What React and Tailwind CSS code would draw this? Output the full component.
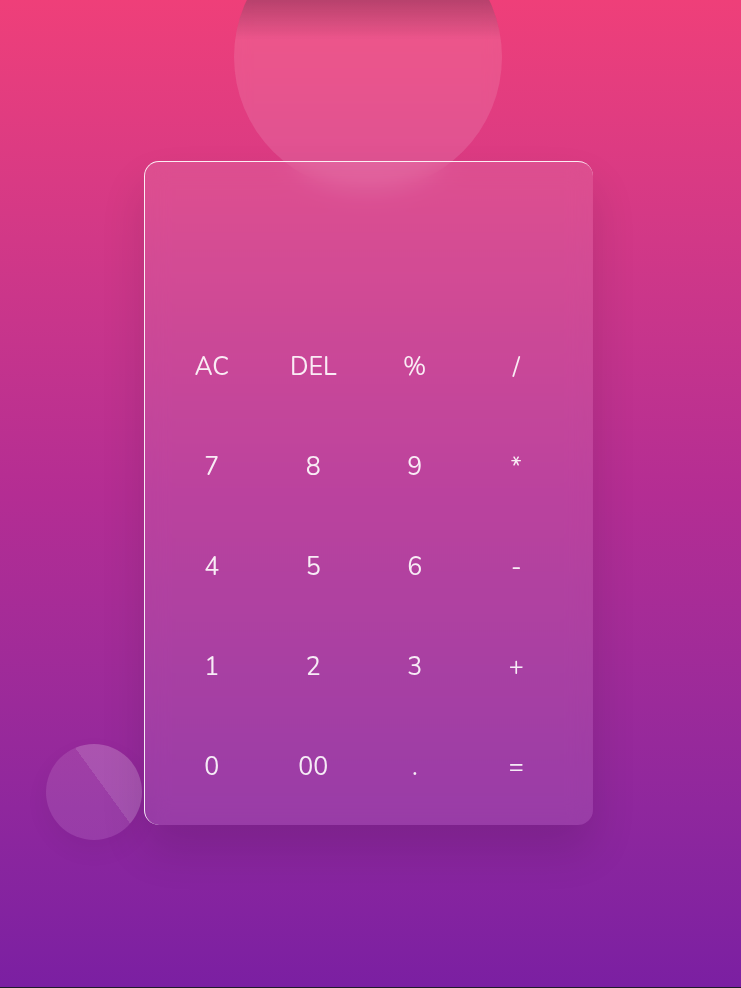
const keys = ['AC', 'DEL', '%', '/', '7', '8', '9', '*', '4', '5', '6', '-', '1', '2', '3', '+', '0', '00', '.', '='];

export default function App() {
    return (
        <div className="min-h-[988px] bg-[#1d1a2a]">
            <div
                className="relative h-[987px] overflow-hidden bg-gradient-to-b from-[#ef3f79] via-[#b42d93] to-[#7b1fa2]"
                style={{ fontFamily: 'Nunito, Lato, "Open Sans", sans-serif' }}
            >
                {/* big glass ball */}
                <div className="absolute left-[234px] top-[-77px] h-[268px] w-[268px] rounded-full bg-[linear-gradient(to_bottom,rgba(100,70,90,0.4)_77px,rgba(255,255,255,0.12)_117px)] backdrop-blur-sm" />

                {/* small glass ball */}
                <div className="absolute left-[46px] top-[744px] h-[96px] w-[96px] rounded-full bg-[linear-gradient(54deg,rgba(255,255,255,0.1)_58%,rgba(255,255,255,0.2)_58%)] shadow-[0_10px_25px_rgba(0,0,0,0.05)]" />

                <div className="flex justify-center pr-[4px] pt-[161px]">
                    <div className="flex h-[664px] w-[449px] flex-col justify-end rounded-[15px] border-l border-t border-white/90 bg-white/10 pb-[7px] pl-4 pr-[26px] shadow-[0_25px_45px_rgba(0,0,0,0.12)] backdrop-blur-md">
                        <div className="grid grid-cols-4">
                            {keys.map((k) => (
                                <button
                                    key={k}
                                    className="flex h-[100px] items-center justify-center text-[25px] text-white/90"
                                >
                                    {k}
                                </button>
                            ))}
                        </div>
                    </div>
                </div>
            </div>
        </div>
    );
}
